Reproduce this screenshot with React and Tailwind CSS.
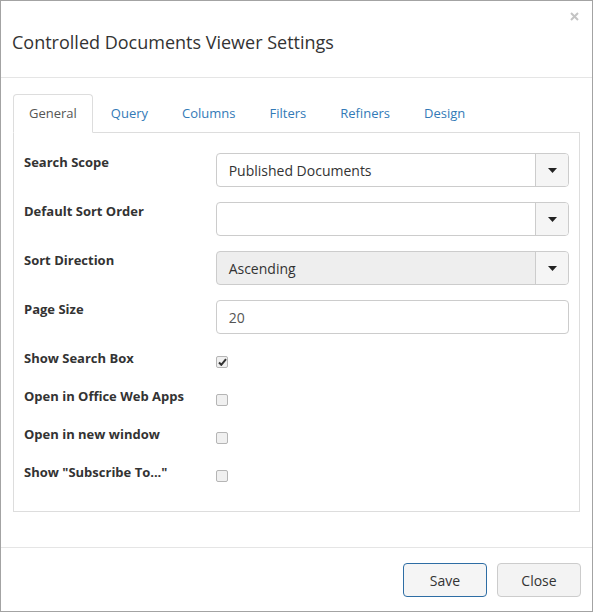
import React from 'react';

const tabs = ['General', 'Query', 'Columns', 'Filters', 'Refiners', 'Design'];

const Caret = () => (
    <svg width="9" height="5" viewBox="0 0 9 5">
        <path d="M0 0 H9 L4.5 5 Z" fill="#222" />
    </svg>
);

const SelectBox = ({ value, disabled }) => (
    <div className={`flex h-[34px] w-[354px] rounded-[4px] border border-[#ccc] overflow-hidden ${disabled ? 'bg-[#eee]' : 'bg-white'}`}>
        <div className="flex-1 flex items-center pl-3 text-[14px] text-[#333]">{value}</div>
        <div className="w-[33px] flex items-center justify-center border-l border-[#ccc] bg-[#f5f5f5]">
            <Caret />
        </div>
    </div>
);

const CheckBox = ({ checked }) => (
    <div className="mt-[7px] w-[12px] h-[12px] rounded-[2px] border border-[#b5b5b5] bg-[#f0f0f0] flex items-center justify-center">
        {checked && (
            <svg width="9" height="8" viewBox="0 0 9 8">
                <path d="M1 4.5 L3.3 6.8 L8 1.2" stroke="#333" strokeWidth="2" fill="none" />
            </svg>
        )}
    </div>
);

export default function App() {
    return (
        <div
            className="w-[593px] h-[612px] border border-[#a3a3a3] bg-white flex flex-col text-[#333]"
            style={{ fontFamily: '"Open Sans", "Noto Sans", sans-serif' }}
        >
            {/* Header */}
            <div className="relative h-[77px] border-b border-[#e5e5e5] flex items-center pl-[11px] pt-[6px]">
                <h4 className="text-[18px] leading-[25px] text-[#333]">Controlled Documents Viewer Settings</h4>
                <svg className="absolute right-[13px] top-[11px]" width="9" height="9" viewBox="0 0 9 9">
                    <path d="M1 1 L8 8 M8 1 L1 8" stroke="#c4c4c4" strokeWidth="2" />
                </svg>
            </div>

            {/* Body */}
            <div className="flex-1 px-3 pt-[16px]">
                <div className="flex h-[39px] border-b border-[#ddd]">
                    {tabs.map((t, i) => (
                        <div
                            key={t}
                            className={`mr-[2px] px-[15px] pt-[9px] text-[13px] leading-[18px] rounded-t-[4px] border ${
                                i === 0
                                    ? 'border-[#ddd] border-b-white bg-white text-[#555] -mb-px'
                                    : 'border-transparent text-[#337ab7]'
                            }`}
                        >
                            {t}
                        </div>
                    ))}
                </div>

                <div className="border border-t-0 border-[#ddd] h-[379px] px-[10px] pt-[20px]">
                    {[
                        ['Search Scope', <SelectBox key="a" value="Published Documents" />],
                        ['Default Sort Order', <SelectBox key="b" value="" />],
                        ['Sort Direction', <SelectBox key="c" value="Ascending" disabled />],
                        [
                            'Page Size',
                            <div key="d" className="h-[34px] w-[354px] rounded-[4px] border border-[#ccc] flex items-center pl-3 text-[14px] text-[#555]">
                                20
                            </div>,
                        ],
                    ].map(([label, control]) => (
                        <div key={label} className="flex mb-[15px]">
                            <div className="w-[192px] text-[13px] font-bold leading-[18px]">{label}</div>
                            {control}
                        </div>
                    ))}

                    {[
                        ['Show Search Box', true],
                        ['Open in Office Web Apps', false],
                        ['Open in new window', false],
                        ['Show "Subscribe To..."', false],
                    ].map(([label, checked]) => (
                        <div key={label} className="flex h-[23px] mb-[15px]">
                            <div className="w-[192px] text-[13px] font-bold leading-[18px]">{label}</div>
                            <CheckBox checked={checked} />
                        </div>
                    ))}
                </div>
            </div>

            {/* Footer */}
            <div className="h-[64px] border-t border-[#e5e5e5] flex items-start justify-end gap-[10px] pr-[11px] pt-[15px]">
                <button className="w-[84px] h-[34px] rounded-[4px] border border-[#2e6da4] bg-[#f5f5f5] text-[14px] text-[#333]">
                    Save
                </button>
                <button className="w-[84px] h-[34px] rounded-[4px] border border-[#ccc] bg-[#f3f3f3] text-[14px] text-[#333]">
                    Close
                </button>
            </div>
        </div>
    );
}
